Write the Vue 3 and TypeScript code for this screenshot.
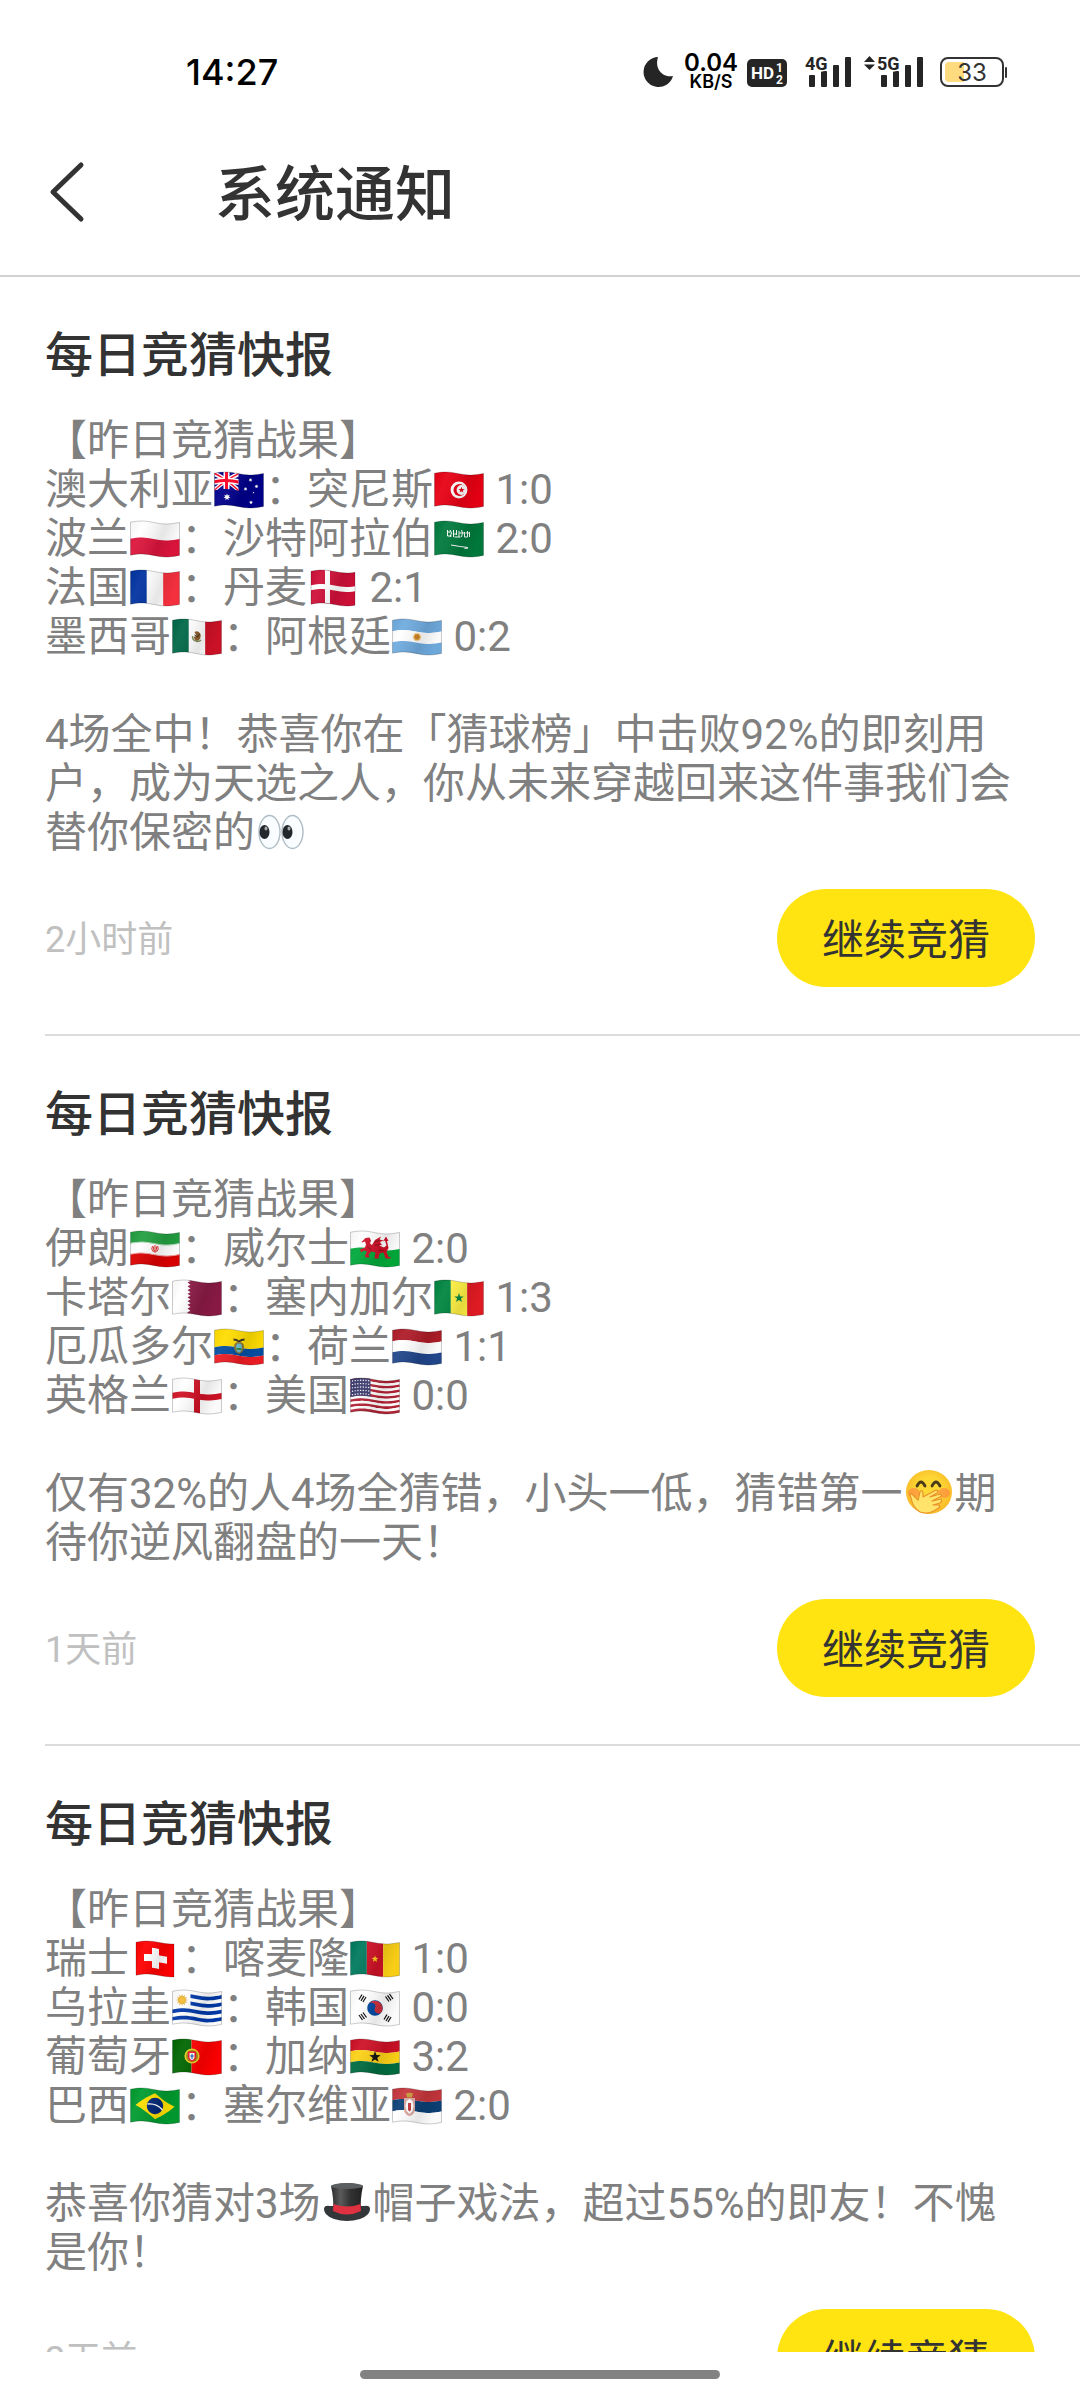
<script setup lang="ts">
interface Shape {
  d: string
  fill?: string
  stroke?: string
  sw?: number
}
interface Flag {
  w: number
  shapes: Shape[]
}
type Pt = [number, number]
type Team = [name: string, flag: string]
interface Match {
  home: Team
  away: Team
  score: string
}
interface Notice {
  id: number
  matches: Match[]
  before: string
  emoji: string
  after: string
  time: string
}

// Flags are laid out on a flat 49 x 33 cloth, then bent along one wave.
const H = 33
const wave = (x: number) => 1.5 - 1.5 * Math.cos((2 * Math.PI * (x - 11)) / 50)
const warp = ([x, y]: Pt) => `${x.toFixed(2)} ${(y + wave(x)).toFixed(2)}`

function poly(pts: Pt[], fill: string): Shape {
  const out: string[] = []
  pts.forEach((p, i) => {
    const q = pts[(i + 1) % pts.length]
    const steps = Math.max(1, Math.ceil(Math.abs(q[0] - p[0]) / 3))
    for (let s = 0; s < steps; s++) {
      out.push(warp([p[0] + ((q[0] - p[0]) * s) / steps, p[1] + ((q[1] - p[1]) * s) / steps]))
    }
  })
  return { d: `M${out.join('L')}Z`, fill }
}
const rect = (x: number, y: number, w: number, h: number, fill: string) =>
  poly([[x, y], [x + w, y], [x + w, y + h], [x, y + h]], fill)
const disc = (cx: number, cy: number, r: number, fill: string): Shape => ({
  d: `M${cx - r} ${cy}a${r} ${r} 0 1 0 ${2 * r} 0a${r} ${r} 0 1 0 ${-2 * r} 0Z`,
  fill,
})
function star(cx: number, cy: number, r: number, fill: string, n = 5, inner = 0.4): Shape {
  const p: string[] = []
  for (let i = 0; i < n * 2; i++) {
    const a = (Math.PI * i) / n - Math.PI / 2
    const k = i % 2 ? r * inner : r
    p.push(`${(cx + k * Math.cos(a)).toFixed(2)} ${(cy + k * Math.sin(a)).toFixed(2)}`)
  }
  return { d: `M${p.join('L')}Z`, fill }
}
const line = (d: string, stroke: string, sw: number): Shape => ({ d, stroke, sw })
const rows = (...c: string[]) => c.map((f, i) => rect(0, (H * i) / c.length, 49, H / c.length, f))
const cols = (...c: string[]) => c.map((f, i) => rect((49 * i) / c.length, 0, 49 / c.length, H, f))

const flags: Record<string, Flag> = {
  au: {
    w: 49,
    shapes: [
      rect(0, 0, 49, H, '#00008b'),
      poly([[0, 0], [3, 0], [24, 14], [24, 17], [21, 17], [0, 3]], '#fff'),
      poly([[24, 0], [21, 0], [0, 14], [0, 17], [3, 17], [24, 3]], '#fff'),
      poly([[0, 0], [1, 0], [24, 16], [24, 17], [23, 17], [0, 1]], '#f02'),
      poly([[24, 0], [23, 0], [0, 16], [0, 17], [1, 17], [24, 1]], '#f02'),
      rect(9, 0, 6, 17, '#fff'),
      rect(0, 5.5, 24, 6, '#fff'),
      rect(10.5, 0, 3, 17, '#f02'),
      rect(0, 7, 24, 3, '#f02'),
      star(12.5, 25, 3.6, '#fff', 7, 0.5),
      star(36, 8, 2, '#fff', 7, 0.5),
      star(31, 17, 2, '#fff', 7, 0.5),
      star(42, 14.5, 2, '#fff', 7, 0.5),
      star(36.5, 30.5, 2, '#fff', 7, 0.5),
      star(39, 20.5, 1.1, '#fff'),
    ],
  },
  tn: {
    w: 49,
    shapes: [
      rect(0, 0, 49, H, '#e70013'),
      disc(24.5, 18, 8.4, '#fff'),
      disc(25, 18, 6, '#e70013'),
      disc(27, 18, 4.9, '#fff'),
      star(27, 18, 3.2, '#e70013'),
    ],
  },
  pl: { w: 49, shapes: rows('#fff', '#dc143c') },
  sa: {
    w: 49,
    shapes: [
      rect(0, 0, 49, H, '#007a3d'),
      line('M13 9v6M15.500 9l1.500 3-1.500 4M19 9v7M19 13h3M22 9v5M24.500 10v6M27 9l1 3-1 4M30 11v5M30 16h3M33 10v6M35 11v5M13 15h4M20 16h6M13 11h3M25 12h5M31 12h4', '#fff', 1),
      line('M16.500 24q8 1.500 17 2.500M30 27.500l3.500-.5', '#fff', 1),
    ],
  },
  fr: { w: 49, shapes: cols('#0032a0', '#fff', '#f9313f') },
  dk: {
    w: 44,
    shapes: [rect(0, 0, 44, H, '#cf1038'), rect(14, 0, 5, H, '#fff'), rect(0, 14, 44, 5, '#fff')],
  },
  mx: {
    w: 49,
    shapes: [
      ...cols('#006847', '#fff', '#ce1126'),
      line('M20 17a5 5 0 0 0 8.500 4', '#7f8f5a', 1.4),
      { d: 'M22 13q4-2 6 2q1 5-3 7q-3-1-4-4l3-1z', fill: '#8a5a2b' },
      line('M22 16l3 2 2-3', '#3d2a14', 1),
    ],
  },
  ar: {
    w: 49,
    shapes: [...rows('#6fabdf', '#fff', '#6fabdf'), star(24.5, 18, 4.5, '#e8a93a', 14, 0.7), disc(24.5, 18, 2.4, '#c8802a')],
  },
  ir: {
    w: 49,
    shapes: [
      ...rows('#239f40', '#fff', '#da0000'),
      rect(0, 10.6, 49, 1, '#a9d9b5'),
      rect(0, 21.5, 49, 1, '#f0a0a0'),
      line('M24.500 14v8M22 15q-2 3 1 6M27 15q2 3-1 6M23 15.500q-.500 3 1 5M26 15.500q.500 3-1 5', '#e01a1a', 0.9),
    ],
  },
  wales: {
    w: 49,
    shapes: [
      ...rows('#fff', '#00a83a'),
      {
        d: 'M11 11l4-4 4-.5 1.500 3-1 3 2 1.500 3-5 6-3.500-1.500 3 4 1-3.500 1.500 2 3-3 .500 5 2 2.500-2-1.500-5-2 1 3-5 2.500 4.500-1.500 0 1.500 7-2 4 2 5h2v1.500h-5l-2-6-4 1-1 4 1 1h-5l1-6-4-1-3 3 1 3h-4l-.500-2 2-4-3-1-3 2-1-3 5-2 1-3-1-3-3 1z',
        fill: '#cf1028',
      },
      line('M24 11l5-2M24 14l5 0M17 16l4 3M28 19l6 1', '#7a0a18', 0.8),
    ],
  },
  qa: {
    w: 49,
    shapes: [
      rect(0, 0, 49, H, '#fff'),
      poly(
        [[49, 0], [49, H], [15, H], ...Array.from({ length: 18 }, (_, i): Pt => [i % 2 ? 18 : 15, H - 1 - (i * 31.5) / 17]), [15, 0]],
        '#8a1a45',
      ),
    ],
  },
  sn: { w: 49, shapes: [...cols('#00853f', '#fdef42', '#e31b23'), star(24.5, 18, 5, '#00853f')] },
  ec: {
    w: 49,
    shapes: [
      rect(0, 0, 49, 17, '#fd0'),
      rect(0, 17, 49, 8, '#034ea2'),
      rect(0, 25, 49, 8, '#ed1c24'),
      line('M19 10.500q3 0 5.500 2q2.500-2 5.500-2', '#3b3320', 1.8),
      { d: 'M24.500 13q5 0 5 5t-5 7q-5-2-5-7t5-5z', fill: '#8a7638' },
      { d: 'M24.500 14.500q3 0 3 4t-3 5q-3-1-3-5t3-4z', fill: '#69bfd0' },
      line('M22 20h5', '#3d8a3d', 2),
    ],
  },
  nl: { w: 49, shapes: rows('#ae1c28', '#fff', '#21468b') },
  eng: { w: 49, shapes: [rect(0, 0, 49, H, '#fff'), rect(21.5, 0, 6, H, '#ce1124'), rect(0, 13.5, 49, 6, '#ce1124')] },
  us: {
    w: 49,
    shapes: [
      ...Array.from({ length: 13 }, (_, i) => rect(0, (H * i) / 13, 49, H / 13, i % 2 ? '#fff' : '#b22234')),
      rect(0, 0, 20, (H * 7) / 13, '#3c3b6e'),
      ...Array.from({ length: 35 }, (_, i) => {
        const x = 2 + (i % 7) * 2.7
        return disc(x, 2.2 + Math.floor(i / 7) * 3.4 + wave(x), 0.7, '#fff')
      }),
    ],
  },
  ch: { w: 38, shapes: [rect(0, 0, 38, H, '#f00'), rect(16, 6.5, 7, 20, '#fff'), rect(8, 13, 23, 7, '#fff')] },
  cm: { w: 49, shapes: [...cols('#007a5e', '#ce1126', '#fcd116'), star(24.5, 18, 3.6, '#fcd116')] },
  uy: {
    w: 49,
    shapes: [
      rect(0, 0, 49, H, '#fff'),
      rect(18, 3.7, 31, 3.7, '#0038a8'),
      rect(18, 11, 31, 3.7, '#0038a8'),
      rect(0, 18.3, 49, 3.7, '#0038a8'),
      rect(0, 25.7, 49, 3.7, '#0038a8'),
      star(9.5, 10, 6, '#e0a21b', 12, 0.55),
      disc(9.5, 10, 3, '#f4bd35'),
    ],
  },
  kr: {
    w: 49,
    shapes: [
      rect(0, 0, 49, H, '#fff'),
      disc(24.5, 18, 7.8, '#0047a0'),
      { d: 'M17.600 14.400A7.800 7.800 0 0 1 31.400 21.600A3.900 3.900 0 0 1 24.500 18A3.900 3.900 0 0 0 17.600 14.400Z', fill: '#cd2e3a' },
      line('M8.500 9.500l3-5M10.500 10.800l3-5M12.500 12l3-5M35 6.500l3.500 5M37 5.300l3.500 5M39 4l3.500 5M8.500 25l3.500 5M10.500 24l3.500 5M12.500 22.500l3.500 5M33.500 29.500l3-5M35.500 31l3-5M37.500 32l3-5', '#111', 1.3),
    ],
  },
  pt: {
    w: 49,
    shapes: [
      rect(0, 0, 19, H, '#060'),
      rect(19, 0, 30, H, '#f00'),
      disc(19.5, 17, 7.6, '#e8d020'),
      disc(19.5, 17, 6, '#a5851c'),
      { d: 'M15.500 12.500h8v6q-1 3.500-4 4q-3-.5-4-4z', fill: '#f01020' },
      { d: 'M17 14h5v5q-1 2-2.500 2.300q-1.500-.3-2.500-2.300z', fill: '#fff' },
      line('M19.500 15v5M17.800 17h3.400', '#0047a0', 1),
    ],
  },
  gh: { w: 49, shapes: [...rows('#ce1126', '#fcd116', '#006b3f'), star(24.5, 18, 6, '#111')] },
  br: {
    w: 49,
    shapes: [
      rect(0, 0, 49, H, '#009b2f'),
      poly([[5, 16.5], [24.5, 3.5], [44, 16.5], [24.5, 29.5]], '#fedf00'),
      disc(24.5, 18, 8.2, '#002776'),
      line('M17 16q9-1 15 6', '#fff', 1.4),
    ],
  },
  rs: {
    w: 49,
    shapes: [
      ...rows('#c6363c', '#0c4076', '#fff'),
      { d: 'M11.500 10h11v12q-1 5-5.500 6q-4.500-1-5.500-6z', fill: '#d9a5a0' },
      { d: 'M13.500 5.500q3.500-1.500 7 0l-1 4h-5z', fill: '#c79a3a' },
      { d: 'M14 13l3-2 3 2 1 5-1 5-3 3-3-3-1-5z', fill: '#fff' },
      { d: 'M15.500 15h3v7l-1.500 1.500-1.500-1.500z', fill: '#c6363c' },
    ],
  },
}

const outline = (w: number) => rect(0, 0, w, H, 'none').d

const notices: Notice[] = [
  {
    id: 1,
    matches: [
      { home: ['澳大利亚', 'au'], away: ['突尼斯', 'tn'], score: '1:0' },
      { home: ['波兰', 'pl'], away: ['沙特阿拉伯', 'sa'], score: '2:0' },
      { home: ['法国', 'fr'], away: ['丹麦', 'dk'], score: '2:1' },
      { home: ['墨西哥', 'mx'], away: ['阿根廷', 'ar'], score: '0:2' },
    ],
    before: '4场全中！恭喜你在「猜球榜」中击败92%的即刻用户，成为天选之人，你从未来穿越回来这件事我们会替你保密的',
    emoji: 'eyes',
    after: '',
    time: '2小时前',
  },
  {
    id: 2,
    matches: [
      { home: ['伊朗', 'ir'], away: ['威尔士', 'wales'], score: '2:0' },
      { home: ['卡塔尔', 'qa'], away: ['塞内加尔', 'sn'], score: '1:3' },
      { home: ['厄瓜多尔', 'ec'], away: ['荷兰', 'nl'], score: '1:1' },
      { home: ['英格兰', 'eng'], away: ['美国', 'us'], score: '0:0' },
    ],
    before: '仅有32%的人4场全猜错，小头一低，猜错第一',
    emoji: 'giggle',
    after: '期待你逆风翻盘的一天！',
    time: '1天前',
  },
  {
    id: 3,
    matches: [
      { home: ['瑞士', 'ch'], away: ['喀麦隆', 'cm'], score: '1:0' },
      { home: ['乌拉圭', 'uy'], away: ['韩国', 'kr'], score: '0:0' },
      { home: ['葡萄牙', 'pt'], away: ['加纳', 'gh'], score: '3:2' },
      { home: ['巴西', 'br'], away: ['塞尔维亚', 'rs'], score: '2:0' },
    ],
    before: '恭喜你猜对3场',
    emoji: 'hat',
    after: '帽子戏法，超过55%的即友！不愧是你！',
    time: '2天前',
  },
]
</script>

<template>
  <div class="screen">
    <svg class="defs" width="0" height="0" aria-hidden="true">
      <defs>
        <linearGradient id="cloth" x1="0" x2="1" y1="0" y2="0.3">
          <stop offset="0" stop-color="#000" stop-opacity="0.04" />
          <stop offset="0.25" stop-color="#fff" stop-opacity="0.06" />
          <stop offset="0.7" stop-color="#000" stop-opacity="0.1" />
          <stop offset="1" stop-color="#000" stop-opacity="0.02" />
        </linearGradient>
        <radialGradient id="skin" cx="0.5" cy="0.45" r="0.55">
          <stop offset="0.5" stop-color="#fdd835" />
          <stop offset="1" stop-color="#f9b827" />
        </radialGradient>
        <linearGradient id="felt" x1="0" x2="1">
          <stop offset="0" stop-color="#2b2b2b" />
          <stop offset="0.3" stop-color="#5a5a5a" />
          <stop offset="0.6" stop-color="#333" />
          <stop offset="1" stop-color="#222" />
        </linearGradient>
      </defs>
    </svg>

    <div class="status">
      <span class="clock">14:27</span>
      <div class="indicators">
        <svg class="moon" width="30" height="32" viewBox="0 0 30 32">
          <path d="M14 1A15 15 0 1 0 29 20C20 22 10 14 14 1Z" fill="#252525" />
        </svg>
        <span class="speed"><b>0.04</b><small>KB/S</small></span>
        <svg width="40" height="32" viewBox="0 0 40 32">
          <rect y="3" width="40" height="28" rx="5" fill="#252525" />
          <text x="4" y="23" font-size="17" fill="#fff">HD</text>
          <text x="29" y="16" font-size="12" fill="#fff">1</text>
          <text x="29" y="28" font-size="12" fill="#fff">2</text>
        </svg>
        <svg class="signal" width="47" height="32" viewBox="0 0 47 32">
          <g fill="#252525">
            <rect x="4" y="19" width="6" height="12" rx="1" />
            <rect x="16" y="15" width="6" height="16" rx="1" />
            <rect x="28" y="9" width="6" height="22" rx="1" />
            <rect x="40" y="1" width="6" height="30" rx="1" />
          </g>
          <text class="net" x="0" y="14" font-size="18">4G</text>
        </svg>
        <svg class="signal5" width="60" height="32" viewBox="0 0 60 32">
          <path d="M5.500 0L11 6H0ZM5.500 14L0 8.500H11Z" fill="#252525" />
          <g fill="#252525">
            <rect x="17" y="19" width="6" height="12" rx="1" />
            <rect x="29" y="15" width="6" height="16" rx="1" />
            <rect x="41" y="9" width="6" height="22" rx="1" />
            <rect x="53" y="1" width="6" height="30" rx="1" />
          </g>
          <text class="net" x="13" y="14" font-size="18">5G</text>
        </svg>
        <svg class="battery" width="68" height="32" viewBox="0 0 68 32">
          <path d="M9 6H24V26H9Q5 26 5 22V10Q5 6 9 6Z" fill="#ffdb80" />
          <rect x="1" y="2" width="62" height="28" rx="7" fill="none" stroke="#333" stroke-width="2" />
          <rect x="65" y="11" width="2" height="11" rx="1" fill="#333" />
          <text class="level" x="32" y="25" font-size="24" text-anchor="middle">33</text>
        </svg>
      </div>
    </div>

    <header class="bar">
      <button class="back" type="button" aria-label="返回">
        <svg width="38" height="64" viewBox="0 0 38 64">
          <path d="M33 4L5 31L33 58" fill="none" stroke="#333" stroke-width="5" stroke-linecap="round" stroke-linejoin="round" />
        </svg>
      </button>
      <h1>系统通知</h1>
    </header>

    <main class="list">
      <article v-for="n in notices" :key="n.id" class="notice">
        <h2>每日竞猜快报</h2>
        <div class="body">
          <p>【昨日竞猜战果】</p>
          <p v-for="m in n.matches" :key="m.home[0]">
            <template v-for="(t, i) in [m.home, m.away]" :key="t[1]"
              >{{ t[0] }}<svg class="flag" width="52" height="38" viewBox="0 0 52 38" role="img" :aria-label="t[0]">
                <g :transform="`translate(${(52 - flags[t[1]].w) / 2} 1)`">
                  <path
                    v-for="(s, k) in flags[t[1]].shapes"
                    :key="k"
                    :d="s.d"
                    :fill="s.fill ?? 'none'"
                    :stroke="s.stroke"
                    :stroke-width="s.sw"
                  />
                  <path :d="outline(flags[t[1]].w)" fill="url(#cloth)" stroke="#000" stroke-opacity="0.2" />
                </g></svg
              >{{ i === 0 ? '：' : '' }}</template
            >&nbsp;{{ m.score }}
          </p>
          <p class="remark">
            {{ n.before
            }}<svg v-if="n.emoji === 'eyes'" class="emoji" width="52" height="46" viewBox="0 0 52 46">
              <g stroke="#b0bec5" stroke-width="1.400" fill="#fafdff">
                <ellipse cx="14.500" cy="24" rx="10.500" ry="16.500" />
                <ellipse cx="37.500" cy="24" rx="10.500" ry="16.500" />
              </g>
              <ellipse cx="9.500" cy="24" rx="5" ry="7" fill="#22282c" />
              <ellipse cx="32.500" cy="24" rx="5" ry="7" fill="#22282c" />
              <ellipse cx="11" cy="20.500" rx="1.500" ry="2" fill="#aaa" />
              <ellipse cx="34" cy="20.500" rx="1.500" ry="2" fill="#aaa" /></svg
            ><svg v-else-if="n.emoji === 'giggle'" class="emoji" width="52" height="46" viewBox="0 0 52 46">
              <ellipse cx="26" cy="23" rx="23" ry="22" fill="url(#skin)" />
              <ellipse cx="11" cy="24" rx="6" ry="5" fill="#ff7a45" opacity="0.55" />
              <ellipse cx="41" cy="24" rx="6" ry="5" fill="#ff7a45" opacity="0.55" />
              <path d="M14 17Q18 9 22 17M29 17Q33 9 37 17" fill="none" stroke="#4a3a1a" stroke-width="2.800" stroke-linecap="round" />
              <path
                d="M8 29Q6 24 9 25L15 31L17 23Q19 20 20 24L20 28L33 21Q36 21 34 24L27 28L37 25Q40 26 37 28L29 32L38 30Q40 32 37 34L30 36L36 36Q38 38 34 40Q26 46 17 43Q10 39 8 29Z"
                fill="#ffe36b"
                stroke="#e8912a"
                stroke-width="1.200"
                stroke-linejoin="round"
              /></svg
            ><svg v-else class="emoji" width="52" height="46" viewBox="0 0 52 46">
              <path d="M3 29Q4 26 9 27L43 27Q48 26 49 29Q50 36 39 40Q26 44 13 40Q2 36 3 29Z" fill="#34373a" />
              <path d="M10 7Q26 1 42 7Q39 20 40 31Q26 40 12 31Q13 20 10 7Z" fill="url(#felt)" />
              <path d="M12.500 25Q26 30 39.500 25L40 32Q26 39 12 32Z" fill="#e03140" />
              <ellipse cx="26" cy="7" rx="16" ry="3" fill="#5b5f62" /></svg
            >{{ n.after }}
          </p>
        </div>
        <footer>
          <time>{{ n.time }}</time>
          <button class="go" type="button">继续竞猜</button>
        </footer>
      </article>
    </main>

    <div class="nav"><span class="pill"></span></div>
  </div>
</template>

<style>
body {
  margin: 0;
  background: #fff;
}
</style>

<style scoped>
.screen {
  display: flex;
  flex-direction: column;
  height: 100vh;
  overflow: hidden;
  background: #fff;
  color: #333;
  font-family: Roboto, 'Noto Sans CJK SC', sans-serif;
  text-spacing-trim: space-all;
}
.defs {
  position: absolute;
}
.status {
  flex: none;
  display: flex;
  align-items: center;
  justify-content: space-between;
  height: 110px;
  padding: 34px 72px 0 186px;
  box-sizing: border-box;
}
.clock {
  font: 500 36px/40px Inter, sans-serif;
  color: #000;
}
.indicators {
  display: flex;
  align-items: center;
}
.indicators svg {
  flex: none;
  font-family: Roboto, sans-serif;
  font-weight: 700;
  overflow: visible;
}
.speed {
  display: flex;
  flex-direction: column;
  align-items: center;
  width: 52px;
  margin: 0 10px 0 11px;
  color: #000;
  font-family: Inter, sans-serif;
}
.speed b {
  font-size: 24px;
  font-weight: 600;
  line-height: 20px;
}
.speed small {
  font-size: 18px;
  font-weight: 600;
  line-height: 18px;
}
.signal {
  margin-left: 18px;
}
.signal5 {
  margin-left: 12px;
}
.battery {
  margin-left: 16px;
}
.net {
  fill: #252525;
  stroke: #fff;
  stroke-width: 3px;
  paint-order: stroke;
}
.indicators .level {
  font-family: Inter, sans-serif;
  font-weight: 400;
  fill: #333;
}
.bar {
  flex: none;
  display: flex;
  align-items: center;
  height: 165px;
  border-bottom: 2px solid #d2d2d2;
}
.back {
  display: flex;
  padding: 0;
  margin: 0 129px 0 48px;
  border: 0;
  background: none;
}
h1 {
  margin: 0;
  padding-top: 6px;
  font-size: 60px;
  font-weight: 500;
  line-height: 72px;
}
.list {
  flex: 1;
  min-height: 0;
  overflow: hidden;
}
.notice {
  margin-left: 45px;
  padding: 51px 45px 47px 0;
  border-bottom: 2px solid #dcdcdc;
}
h2 {
  margin: 0 0 32px;
  font-size: 48px;
  font-weight: 500;
  line-height: 56px;
}
.body {
  font-size: 42px;
  line-height: 49px;
  color: #808080;
}
.body p {
  margin: 0;
}
.body .remark {
  margin-top: 49px;
}
.flag {
  vertical-align: -5px;
}
.emoji {
  vertical-align: -7px;
}
footer {
  display: flex;
  align-items: center;
  justify-content: space-between;
  margin-top: 32px;
}
time {
  padding-top: 4px;
  font-size: 36px;
  line-height: 42px;
  color: #c0c0c0;
}
.go {
  height: 98px;
  padding: 4px 45px 0;
  border: 0;
  border-radius: 49px;
  background: #ffe411;
  color: #333;
  font: 400 42px/49px Roboto, 'Noto Sans CJK SC', sans-serif;
}
.nav {
  flex: none;
  display: flex;
  justify-content: center;
  height: 48px;
  padding-top: 18px;
  box-sizing: border-box;
}
.pill {
  width: 33.333%;
  height: 9px;
  border-radius: 5px;
  background: #828282;
}
</style>
